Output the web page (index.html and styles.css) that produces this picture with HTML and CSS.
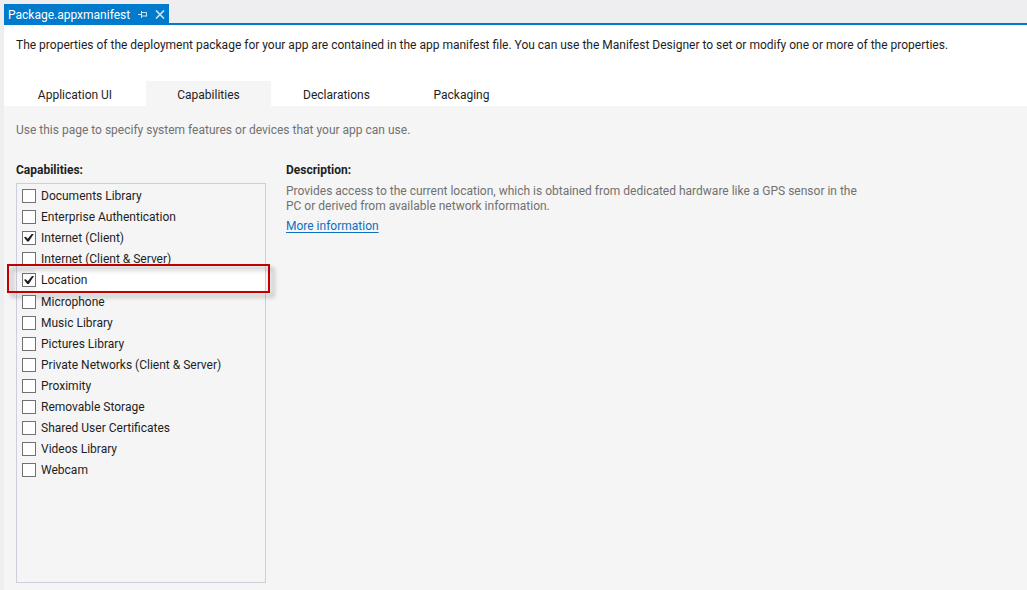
FILE: index.html
```html
<!DOCTYPE html>
<html lang="en">
<head>
<meta charset="utf-8">
<title>Package.appxmanifest</title>
<link rel="stylesheet" href="styles.css">
</head>
<body>
<div class="designer">
  <header class="doc-bar">
    <div class="doc-tab">
      <span class="doc-name">Package.appxmanifest</span>
      <button class="icon-btn pin" type="button" aria-label="Pin tab"><svg width="9" height="8" viewBox="0 0 9 8"><path d="M0 3.5H3M3.5 0V7M4 1.5H8.5V5.5M4 5H8.5" fill="none" stroke="currentColor"/></svg></button>
      <button class="icon-btn" type="button" aria-label="Close tab"><svg width="10" height="9" viewBox="0 0 10 9"><path d="M1 .5L9 8.5M9 .5L1 8.5" fill="none" stroke="currentColor" stroke-width="1.6"/></svg></button>
    </div>
  </header>
  <p class="intro">The properties of the deployment package for your app are contained in the app manifest file. You can use the Manifest Designer to set or modify one or more of the properties.</p>
  <nav class="tabs">
    <button class="tab first" type="button">Application UI</button>
    <button class="tab selected" type="button">Capabilities</button>
    <button class="tab" type="button">Declarations</button>
    <button class="tab" type="button">Packaging</button>
  </nav>
  <main class="page">
    <p class="hint">Use this page to specify system features or devices that your app can use.</p>
    <div class="columns">
      <section class="capabilities">
        <h2>Capabilities:</h2>
        <div class="list">
          <label class="item"><input type="checkbox"><span>Documents Library</span></label>
          <label class="item"><input type="checkbox"><span>Enterprise Authentication</span></label>
          <label class="item"><input type="checkbox" checked><span>Internet (Client)</span></label>
          <label class="item"><input type="checkbox"><span>Internet (Client &amp; Server)</span></label>
          <label class="item current"><input type="checkbox" checked><span>Location</span></label>
          <label class="item"><input type="checkbox"><span>Microphone</span></label>
          <label class="item"><input type="checkbox"><span>Music Library</span></label>
          <label class="item"><input type="checkbox"><span>Pictures Library</span></label>
          <label class="item"><input type="checkbox"><span>Private Networks (Client &amp; Server)</span></label>
          <label class="item"><input type="checkbox"><span>Proximity</span></label>
          <label class="item"><input type="checkbox"><span>Removable Storage</span></label>
          <label class="item"><input type="checkbox"><span>Shared User Certificates</span></label>
          <label class="item"><input type="checkbox"><span>Videos Library</span></label>
          <label class="item"><input type="checkbox"><span>Webcam</span></label>
        </div>
      </section>
      <section class="description">
        <h2>Description:</h2>
        <p>Provides access to the current location, which is obtained from dedicated hardware like a GPS sensor in the PC or derived from available network information.</p>
        <a href="#">More information</a>
      </section>
    </div>
  </main>
</div>
</body>
</html>
```
FILE: styles.css
```css
* { box-sizing: border-box; }
body {
  margin: 0;
  background: #eeeef0;
  color: #1e1e1e;
  font: 12px/16px Roboto, "Open Sans", sans-serif;
}
p, h2 { margin: 0; }
button { font: inherit; color: inherit; border: 0; padding: 0; background: none; }
.designer {
  display: flex;
  flex-direction: column;
  min-height: 100vh;
  padding-left: 4px;
}
.doc-bar {
  display: flex;
  padding-top: 4px;
  border-bottom: 2px solid #007acc;
}
.doc-tab {
  display: flex;
  align-items: center;
  gap: 8px;
  height: 19px;
  padding: 2px 4px 0;
  background: #007acc;
  color: #fff;
}
.icon-btn { display: flex; color: #d0e6f5; }
.intro {
  padding: 12px 12px 28px;
  background: #fff;
}
.tabs { display: flex; background: #fff; }
.tab { width: 125px; height: 25px; padding-top: 2px; }
.tab.first { width: 142px; }
.tab.selected { margin-right: 3px; background: #f5f5f5; }
.page {
  display: flex;
  flex-direction: column;
  flex: 1;
  padding: 16px 12px 7px;
  background: #f5f5f5;
}
.hint { color: #717171; }
.columns { display: flex; flex: 1; gap: 20px; margin-top: 24px; }
.capabilities { display: flex; flex-direction: column; width: 250px; }
h2 { font-size: 12px; line-height: 16px; font-weight: 700; }
.list {
  flex: 1;
  margin-top: 5px;
  padding-top: 1px;
  border: 1px solid #cccedb;
}
.item {
  position: relative;
  display: flex;
  align-items: center;
  gap: 5px;
  height: 21px;
  padding-left: 5px;
}
.item input {
  appearance: none;
  display: grid;
  place-items: center;
  width: 14px;
  height: 14px;
  margin: 0;
  border: 1px solid #717171;
  background: #fefefe;
}
.item input:checked::before {
  content: "";
  width: 10px;
  height: 8px;
  background: #1e1e1e;
  clip-path: polygon(0 48%, 18% 40%, 38% 66%, 80% 0, 100% 0, 48% 100%, 32% 100%);
}
.current { height: 22px; background: linear-gradient(#fff, #fff) 18px 0 no-repeat; }
.current::after {
  content: "";
  position: absolute;
  inset: -5px -5px -2px -10px;
  border: 2px solid #c00000;
  filter: drop-shadow(4px 4px 2px rgba(0, 0, 0, .3));
  pointer-events: none;
}
.description { flex: 1; max-width: 572px; }
.description p {
  margin: 6px 0 4px;
  line-height: 15px;
  color: #717171;
}
.description a { color: #0e70c0; text-underline-offset: 2px; }
```
